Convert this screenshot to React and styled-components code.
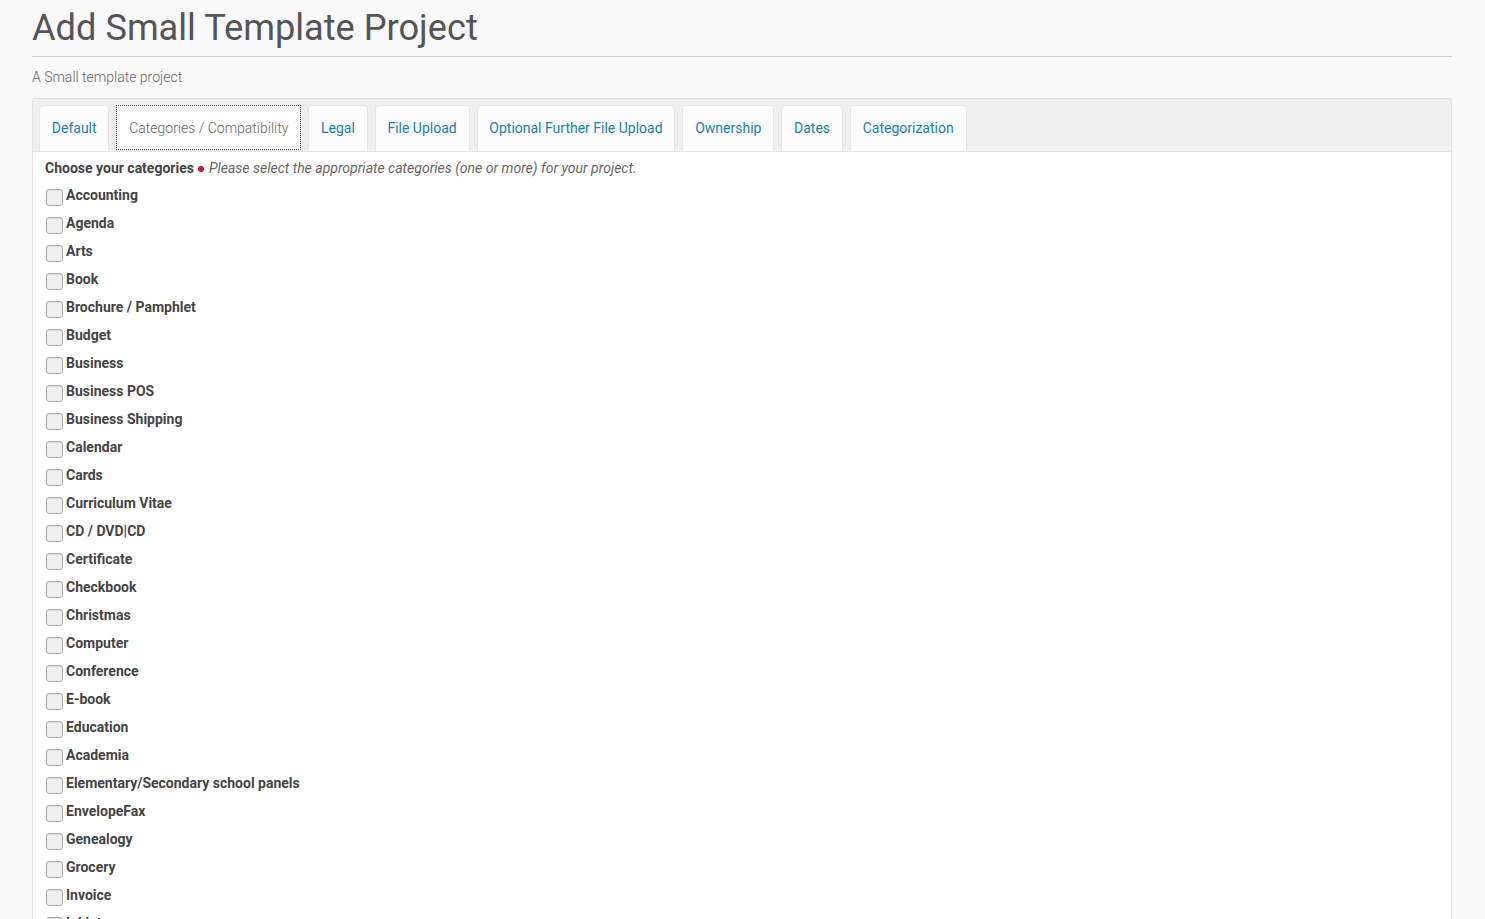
import React from "react";
import styled, { createGlobalStyle } from "styled-components";

const Global = createGlobalStyle`
  html, body { margin: 0; padding: 0; background: #f9f9f9; }
  body { font-family: Roboto, "Liberation Sans", sans-serif; color: #555; overflow: hidden; }
`;

const Page = styled.div`
  padding: 0 33px 0 32px;
`;

const Title = styled.h1`
  margin: 0;
  padding-top: 5px;
  font-size: 36.2px;
  font-weight: 400;
  line-height: 46px;
  color: #555;
  border-bottom: 1px solid #ccc;
  padding-bottom: 5px;
`;

const Subtitle = styled.p`
  margin: 11px 0 12px;
  font-size: 14px;
  font-weight: 300;
  line-height: 18px;
  color: #666;
`;

const Panel = styled.div`
  border: 1px solid #e3e3e3;
  border-radius: 3px;
  background: #fff;
  min-height: 900px;
`;

const TabBar = styled.div`
  display: flex;
  gap: 7px;
  padding: 6px 6px 0;
  background: #efefef;
  border-bottom: 1px solid #e3e3e3;
  border-radius: 3px 3px 0 0;
`;

const Tab = styled.div`
  font-size: 14px;
  line-height: 20px;
  padding: 12px 11.8px;
  padding-bottom: ${p => (p.$active ? "11px" : "13px")};
  color: ${p => (p.$active ? "#666" : "#1a7eb5")};
  font-weight: ${p => (p.$active ? 300 : 400)};
  background: ${p => (p.$active ? "#fff" : "#fcfcfc")};
  border: ${p => (p.$active ? "1px dotted #444" : "1px solid #e6e6e6")};
  border-bottom: ${p => (p.$active ? "1px dotted #444" : "none")};
  border-radius: ${p => (p.$active ? "0" : "4px 4px 0 0")};
  margin-bottom: ${p => (p.$active ? "1px" : "0")};
  white-space: nowrap;
`;

const Body = styled.div`
  padding: 6px 12px 0;
`;

const Heading = styled.div`
  font-size: 14px;
  line-height: 20px;
  display: flex;
  align-items: center;
  gap: 4px;
`;

const Strong = styled.span`
  font-weight: 700;
  color: #444;
`;

const Dot = styled.span`
  display: inline-block;
  width: 6px;
  height: 6px;
  border-radius: 50%;
  background: #cc1444;
  margin: 2px 1px 0 0;
`;

const Hint = styled.span`
  font-style: italic;
  font-weight: 400;
  color: #666;
`;

const List = styled.div`
  display: flex;
  flex-direction: column;
  margin-top: 9px;
`;

const Row = styled.label`
  display: flex;
  align-items: flex-start;
  height: 28px;
  gap: 3px;
`;

const Box = styled.span`
  box-sizing: border-box;
  width: 17px;
  height: 17px;
  margin-top: 2px;
  margin-left: 1px;
  border: 1px solid #a9a9a9;
  border-radius: 3px;
  background: #f0f0f0;
  box-shadow: inset 0 1px 1px rgba(0,0,0,0.06);
`;

const Label = styled.span`
  font-size: 14px;
  font-weight: 700;
  line-height: 16px;
  color: #444;
`;

const tabs = [
  "Default",
  "Categories / Compatibility",
  "Legal",
  "File Upload",
  "Optional Further File Upload",
  "Ownership",
  "Dates",
  "Categorization",
];

const cats = [
  "Accounting", "Agenda", "Arts", "Book", "Brochure / Pamphlet", "Budget", "Business",
  "Business POS", "Business Shipping", "Calendar", "Cards", "Curriculum Vitae", "CD / DVD|CD",
  "Certificate", "Checkbook", "Christmas", "Computer", "Conference", "E-book", "Education",
  "Academia", "Elementary/Secondary school panels", "EnvelopeFax", "Genealogy", "Grocery",
  "Invoice", "Inkjet",
];

export default function App() {
  return (
    <Page>
      <Global />
      <Title>Add Small Template Project</Title>
      <Subtitle>A Small template project</Subtitle>
      <Panel>
        <TabBar>
          {tabs.map(t => (
            <Tab key={t} $active={t === "Categories / Compatibility"}>{t}</Tab>
          ))}
        </TabBar>
        <Body>
          <Heading>
            <Strong>Choose your categories</Strong>
            <Dot />
            <Hint>Please select the appropriate categories (one or more) for your project.</Hint>
          </Heading>
          <List>
            {cats.map(c => (
              <Row key={c}>
                <Box />
                <Label>{c}</Label>
              </Row>
            ))}
          </List>
        </Body>
      </Panel>
    </Page>
  );
}
